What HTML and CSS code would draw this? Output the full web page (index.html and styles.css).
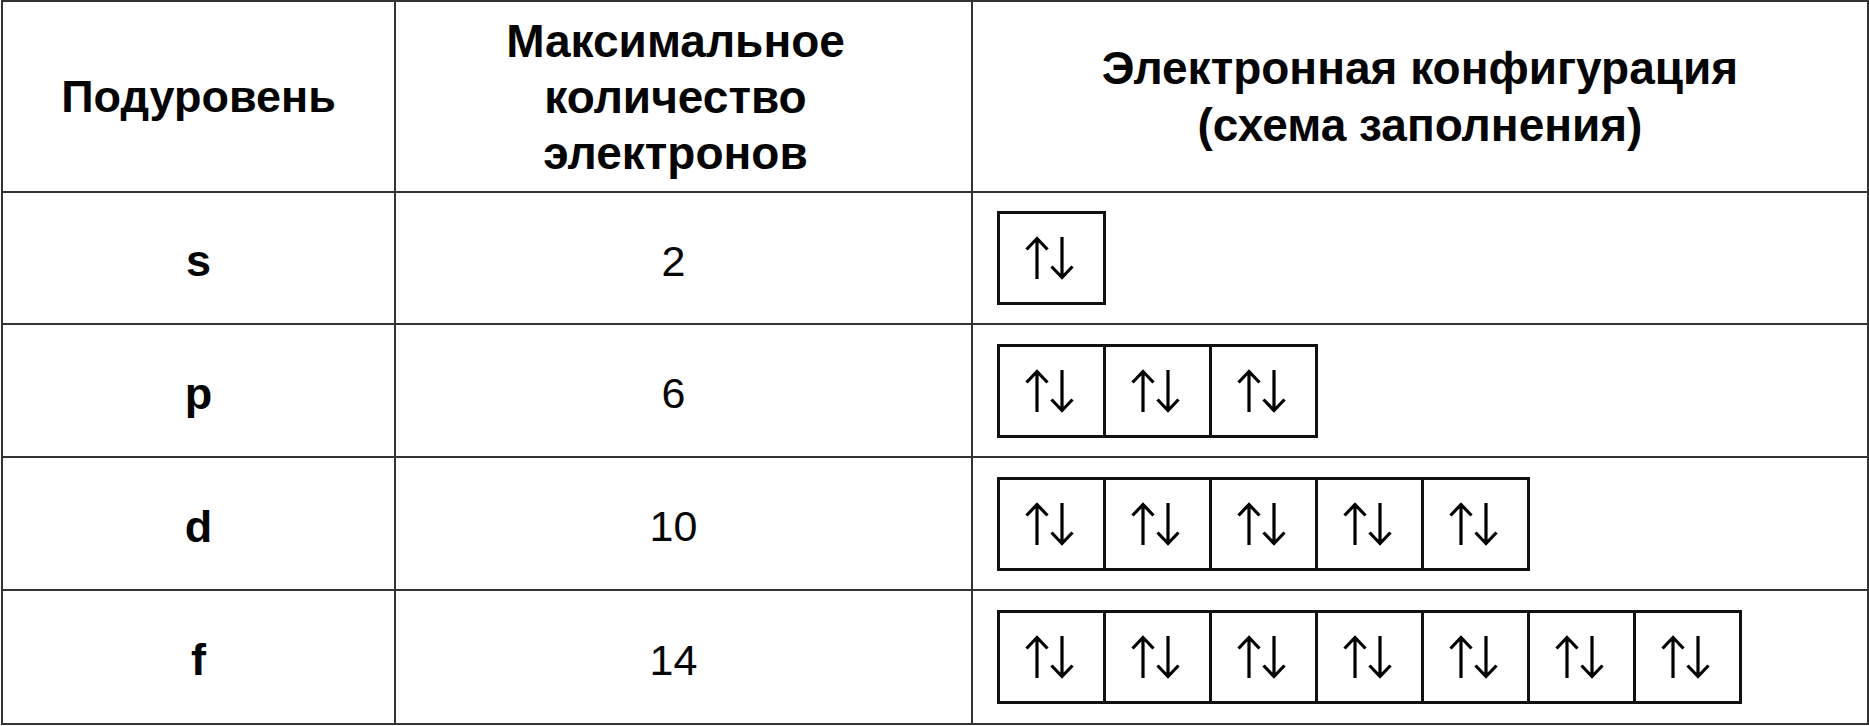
FILE: index.html
```html
<!DOCTYPE html>
<html lang="ru">
<head>
<meta charset="utf-8">
<title>Подуровни</title>
<link rel="stylesheet" href="styles.css">
</head>
<body>
<svg class="defs" width="0" height="0" aria-hidden="true">
  <symbol id="pair" viewBox="0 0 50 44">
    <path d="M12 43 V2.5 M1.5 13.5 L12 2.5 L22.5 13.5" />
    <path d="M37 1 V41.5 M26.5 30.5 L37 41.5 L47.5 30.5" />
  </symbol>
</svg>
<table class="orb">
  <colgroup><col class="c1"><col class="c2"><col class="c3"></colgroup>
  <thead>
    <tr class="head">
      <th class="h1">Подуровень</th>
      <th class="h2">Максимальное<br>количество<br>электронов</th>
      <th class="h3">Электронная конфигурация<br>(схема заполнения)</th>
    </tr>
  </thead>
  <tbody>
    <tr class="row r1">
      <td class="sub">s</td>
      <td class="num">2</td>
      <td class="cfg"><div class="cells">
        <div class="cell"><svg class="ar"><use href="#pair"/></svg></div>
      </div></td>
    </tr>
    <tr class="row r2">
      <td class="sub">p</td>
      <td class="num">6</td>
      <td class="cfg"><div class="cells">
        <div class="cell"><svg class="ar"><use href="#pair"/></svg></div>
        <div class="cell"><svg class="ar"><use href="#pair"/></svg></div>
        <div class="cell"><svg class="ar"><use href="#pair"/></svg></div>
      </div></td>
    </tr>
    <tr class="row r3">
      <td class="sub">d</td>
      <td class="num">10</td>
      <td class="cfg"><div class="cells">
        <div class="cell"><svg class="ar"><use href="#pair"/></svg></div>
        <div class="cell"><svg class="ar"><use href="#pair"/></svg></div>
        <div class="cell"><svg class="ar"><use href="#pair"/></svg></div>
        <div class="cell"><svg class="ar"><use href="#pair"/></svg></div>
        <div class="cell"><svg class="ar"><use href="#pair"/></svg></div>
      </div></td>
    </tr>
    <tr class="row r4">
      <td class="sub">f</td>
      <td class="num">14</td>
      <td class="cfg"><div class="cells">
        <div class="cell"><svg class="ar"><use href="#pair"/></svg></div>
        <div class="cell"><svg class="ar"><use href="#pair"/></svg></div>
        <div class="cell"><svg class="ar"><use href="#pair"/></svg></div>
        <div class="cell"><svg class="ar"><use href="#pair"/></svg></div>
        <div class="cell"><svg class="ar"><use href="#pair"/></svg></div>
        <div class="cell"><svg class="ar"><use href="#pair"/></svg></div>
        <div class="cell"><svg class="ar"><use href="#pair"/></svg></div>
      </div></td>
    </tr>
  </tbody>
</table>
</body>
</html>
```
FILE: styles.css
```css
html, body {
  margin: 0;
  padding: 0;
  background: #fff;
}
body {
  font-family: "Liberation Sans", Arial, sans-serif;
  color: #050505;
  width: 1869px;
  height: 726px;
  overflow: hidden;
}
.defs {
  position: absolute;
  width: 0;
  height: 0;
}
.orb {
  border-collapse: collapse;
  table-layout: fixed;
  width: 1868px;
  margin: 0 0 0 1px;
}
.c1 { width: 393px; }
.c2 { width: 577px; }
.c3 { width: auto; }
.orb th,
.orb td {
  border: 2px solid #333;
  padding: 0;
  text-align: center;
  vertical-align: middle;
}
.orb th {
  font-weight: 700;
}
.head { height: 191px; }
.h1 {
  font-size: 45px;
}
.h2 {
  font-size: 46px;
  line-height: 56px;
}
.orb th.h2 {
  padding-right: 16px;
}
.h3 {
  font-size: 46px;
  line-height: 57px;
}
.r1 { height: 132px; }
.r2 { height: 133px; }
.r3 { height: 133px; }
.r4 { height: 134px; }
.orb td.sub {
  font-size: 45px;
  font-weight: 700;
  padding-top: 6px;
}
.orb td.num {
  font-size: 43px;
  font-weight: 400;
  padding-top: 6px;
  padding-right: 20px;
}
.orb td.cfg {
  text-align: left;
  padding-left: 24px;
}
.cells {
  display: flex;
}
.cell {
  box-sizing: border-box;
  width: 109px;
  height: 94px;
  border: 3px solid #111;
  display: flex;
  align-items: center;
  justify-content: center;
}
.cell + .cell {
  margin-left: -3px;
}
.ar {
  width: 50px;
  height: 44px;
  margin-right: 4px;
  fill: none;
  stroke: #000;
  stroke-width: 3.2;
  stroke-linecap: butt;
  stroke-linejoin: miter;
}
```
